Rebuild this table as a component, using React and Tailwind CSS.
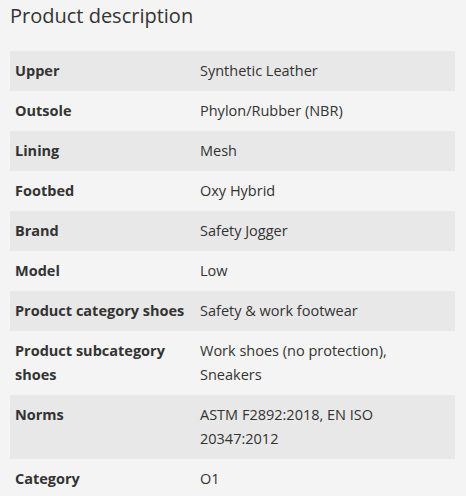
const rows = [
  ["Upper", "Synthetic Leather"],
  ["Outsole", "Phylon/Rubber (NBR)"],
  ["Lining", "Mesh"],
  ["Footbed", "Oxy Hybrid"],
  ["Brand", "Safety Jogger"],
  ["Model", "Low"],
  ["Product category shoes", "Safety & work footwear"],
  ["Product subcategory shoes", "Work shoes (no protection), Sneakers"],
  ["Norms", "ASTM F2892:2018, EN ISO 20347:2012"],
  ["Category", "O1"],
];

export default function App() {
  return (
    <div
      className="min-h-[496px] bg-[#f4f4f4] px-[10px] text-[#333333]"
      style={{ fontFamily: '"Open Sans", "Noto Sans", sans-serif' }}
    >
      <h2 className="pt-[1px] text-[20px] leading-[30px] font-medium">Product description</h2>
      <table className="mt-[20px] w-[445px] table-fixed border-collapse text-[14.5px] leading-[24px]">
        <colgroup>
          <col className="w-[185px]" />
          <col />
        </colgroup>
        <tbody>
          {rows.map(([label, value], i) => (
            <tr key={label} className={i % 2 === 0 ? "bg-[#e8e8e8]" : ""}>
              <th className="h-[40px] px-[5px] pt-[8px] pb-[8px] text-left align-top font-bold">{label}</th>
              <td className="h-[40px] px-[5px] pt-[8px] pb-[8px] align-top">{value}</td>
            </tr>
          ))}
        </tbody>
      </table>
    </div>
  );
}
